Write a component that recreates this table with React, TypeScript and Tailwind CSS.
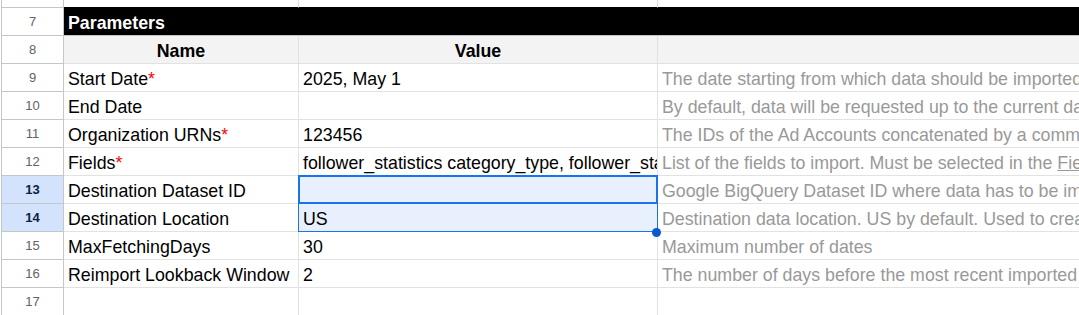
import React from 'react';

type Param = {
  n: number;
  name: string;
  required?: boolean;
  value: string;
  desc: React.ReactNode;
};

const params: Param[] = [
  { n: 9, name: 'Start Date', required: true, value: '2025, May 1', desc: 'The date starting from which data should be imported into the destination table' },
  { n: 10, name: 'End Date', value: '', desc: 'By default, data will be requested up to the current date' },
  { n: 11, name: 'Organization URNs', required: true, value: '123456', desc: 'The IDs of the Ad Accounts concatenated by a comma' },
  {
    n: 12,
    name: 'Fields',
    required: true,
    value: 'follower_statistics category_type, follower_statistics function, follower_statistics seniority',
    desc: (
      <>
        List of the fields to import. Must be selected in the <span className="underline">Fields</span> sheet
      </>
    ),
  },
  { n: 13, name: 'Destination Dataset ID', value: '', desc: 'Google BigQuery Dataset ID where data has to be imported' },
  { n: 14, name: 'Destination Location', value: 'US', desc: 'Destination data location. US by default. Used to create a new dataset' },
  { n: 15, name: 'MaxFetchingDays', value: '30', desc: 'Maximum number of dates' },
  { n: 16, name: 'Reimport Lookback Window', value: '2', desc: 'The number of days before the most recent imported date to re-request' },
];

const selectedRows = [13, 14];
const activeRow = 13;

const grid = 'border-r border-b border-[#e2e2e2]';
const cellText = 'px-[4px] pb-[2px] flex items-end whitespace-nowrap';

function RowHead({ n, active }: { n?: number; active?: boolean }) {
  return (
    <div
      className={`w-[63px] shrink-0 border-x border-b border-[#c4c7c5] flex items-center justify-center text-[13px] ${
        active ? 'bg-[#d3e3fd] font-bold text-[#0a1f44]' : 'bg-white text-[#5f6368]'
      }`}
    >
      {n}
    </div>
  );
}

export default function App() {
  return (
    <div className="w-[1079px] h-[315px] overflow-hidden bg-white pl-[1px] font-['Liberation_Sans',Arial,sans-serif] text-[17.8px] text-black leading-[20px]">
      {/* row 6, mostly scrolled off */}
      <div className="flex h-[8px]">
        <RowHead />
        <div className="w-[235px] shrink-0 border-r border-b border-r-[#e2e2e2] border-b-black" />
        <div className="w-[359px] shrink-0 border-r border-b border-r-[#e2e2e2] border-b-black" />
        <div className="flex-1 border-b border-b-black" />
      </div>

      {/* section title */}
      <div className="flex h-[28px]">
        <RowHead n={7} />
        <div className={`flex-1 bg-black text-white font-bold border-b border-[#c4c7c5] overflow-hidden ${cellText}`}>Parameters</div>
      </div>

      {/* column captions */}
      <div className="flex h-[28px] bg-[#f3f3f3]">
        <RowHead n={8} />
        <div className={`w-[235px] shrink-0 ${grid} ${cellText} justify-center font-bold`}>Name</div>
        <div className={`w-[359px] shrink-0 ${grid} ${cellText} justify-center font-bold`}>Value</div>
        <div className="flex-1 border-b border-[#e2e2e2]" />
      </div>

      {params.map((p) => {
        const selected = selectedRows.includes(p.n);
        const isActive = p.n === activeRow;
        return (
          <div key={p.n} className="flex h-[28px]">
            <RowHead n={p.n} active={selected} />
            <div className={`w-[235px] shrink-0 overflow-hidden ${grid} ${cellText}`}>
              <span>
                {p.name}
                {p.required && <span className="text-[#ff0000]">*</span>}
              </span>
            </div>
            <div
              className={`w-[359px] shrink-0 ${grid} ${cellText} ${isActive ? 'relative' : 'overflow-hidden'} ${
                selected ? 'bg-[#e8f0fe]' : ''
              }`}
            >
              <span>{p.value}</span>
              {isActive && (
                <>
                  {/* selected range and active cell outline */}
                  <div className="absolute left-[-1px] top-[-1px] w-[360px] h-[57px] border border-[#1a73e8] pointer-events-none z-10" />
                  <div className="absolute left-[-1px] top-[-1px] w-[360px] h-[29px] border-2 border-[#1a73e8] pointer-events-none z-10" />
                  <div className="absolute left-[353px] top-[52px] w-[9px] h-[9px] rounded-full bg-[#0b57d0] z-20" />
                </>
              )}
            </div>
            <div className={`flex-1 min-w-0 overflow-hidden border-b border-[#e2e2e2] text-[#999999] ${cellText}`}>
              <span>{p.desc}</span>
            </div>
          </div>
        );
      })}

      {/* empty row 17 */}
      <div className="flex h-[28px]">
        <RowHead n={17} />
        <div className={`w-[235px] shrink-0 ${grid}`} />
        <div className={`w-[359px] shrink-0 ${grid}`} />
        <div className="flex-1 border-b border-[#e2e2e2]" />
      </div>
    </div>
  );
}
